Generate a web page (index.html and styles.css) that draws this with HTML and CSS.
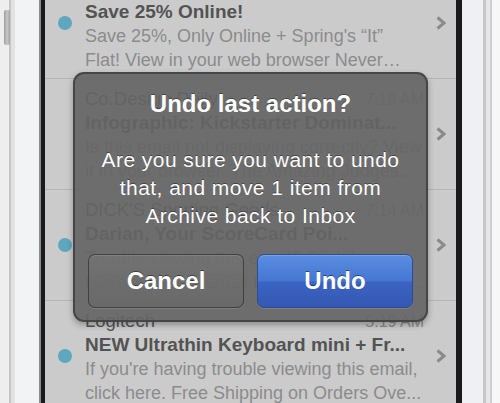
FILE: index.html
```html
<!DOCTYPE html>
<html>
<head>
<meta charset="utf-8">
<link rel="stylesheet" href="styles.css">
</head>
<body>
<div class="phone">
  <div class="frame-left"><div class="side-button"></div></div>
  <div class="screen">
    <div class="list">
      <div class="row">
        <div class="dot-col"><span class="dot"></span></div>
        <div class="content">
          <div class="meta"></div>
          <div class="subject">Save 25% Online!</div>
          <div class="preview">Save 25%, Only Online + Spring's “It”</div>
          <div class="preview">Flat! View in your web browser Never…</div>
        </div>
        <div class="chev-col"><svg class="chev" width="10" height="14" viewBox="0 0 10 14"><polyline points="1.5,1.5 8,7 1.5,12.5" fill="none" stroke="#8a8a8a" stroke-width="3"/></svg></div>
      </div>
      <div class="row">
        <div class="dot-col"></div>
        <div class="content">
          <div class="meta"><span class="sender">Co.Design Daily</span><span class="time">7:16 AM</span></div>
          <div class="subject">Infographic: Kickstarter Dominat...</div>
          <div class="preview">Is this email not displaying correctly? View</div>
          <div class="preview">it in your browser. The Amazing Judges...</div>
        </div>
        <div class="chev-col"><svg class="chev" width="10" height="14" viewBox="0 0 10 14"><polyline points="1.5,1.5 8,7 1.5,12.5" fill="none" stroke="#8a8a8a" stroke-width="3"/></svg></div>
      </div>
      <div class="row">
        <div class="dot-col"><span class="dot"></span></div>
        <div class="content">
          <div class="meta"><span class="sender">DICK'S Sporting Goods</span><span class="time">7:14 AM</span></div>
          <div class="subject">Darian, Your ScoreCard Poi...</div>
          <div class="preview">Trouble viewing this email? Click here.</div>
          <div class="preview">Never miss an email from DICK'S Sports...</div>
        </div>
        <div class="chev-col"><svg class="chev" width="10" height="14" viewBox="0 0 10 14"><polyline points="1.5,1.5 8,7 1.5,12.5" fill="none" stroke="#8a8a8a" stroke-width="3"/></svg></div>
      </div>
      <div class="row">
        <div class="dot-col"><span class="dot"></span></div>
        <div class="content">
          <div class="meta"><span class="sender">Logitech</span><span class="time">5:19 AM</span></div>
          <div class="subject">NEW Ultrathin Keyboard mini + Fr...</div>
          <div class="preview">If you're having trouble viewing this email,</div>
          <div class="preview">click here. Free Shipping on Orders Ove...</div>
        </div>
        <div class="chev-col"><svg class="chev" width="10" height="14" viewBox="0 0 10 14"><polyline points="1.5,1.5 8,7 1.5,12.5" fill="none" stroke="#8a8a8a" stroke-width="3"/></svg></div>
      </div>
    </div>
    <div class="alert">
      <div class="alert-title">Undo last action?</div>
      <div class="alert-message">Are you sure you want to undo<br>that, and move 1 item from<br>Archive back to Inbox</div>
      <div class="alert-buttons">
        <div class="btn btn-cancel">Cancel</div>
        <div class="btn btn-undo">Undo</div>
      </div>
    </div>
  </div>
  <div class="frame-right"></div>
</div>
</body>
</html>
```
FILE: styles.css
```css
html, body {
  margin: 0;
  padding: 0;
}
body {
  width: 500px;
  height: 403px;
  overflow: hidden;
  background: #f2f3f5;
  font-family: "Liberation Sans", Arial, Helvetica, sans-serif;
}
.phone {
  display: flex;
  height: 403px;
}
.frame-left {
  width: 45px;
  flex: none;
  position: relative;
  background: linear-gradient(to right,
    #eeeeee 0, #eeeeee 9px,
    #c4c4c4 9px, #c4c4c4 11px,
    #e2e2e2 11px, #e2e2e2 15px,
    #f2f3f5 15px, #f2f3f5 39px,
    #8c8c8c 39px, #8c8c8c 41px,
    #1b1b1b 41px, #1b1b1b 45px);
}
.side-button {
  position: absolute;
  left: 4px;
  top: 10px;
  width: 6px;
  height: 35px;
  border-radius: 2px;
  background: linear-gradient(to right, #9a9a9a, #c9c9c9 50%, #a5a5a5);
}
.frame-right {
  width: 44px;
  flex: none;
  background: linear-gradient(to right,
    #1b1b1b 0, #1b1b1b 6px,
    #eef0f3 6px, #eef0f3 27px,
    #c6c6c6 27px, #c6c6c6 30px,
    #e6e6e6 30px, #e6e6e6 34px,
    #cfcfcf 34px, #cfcfcf 36px,
    #f7f7f7 36px, #f7f7f7 44px);
}
.screen {
  flex: 1;
  position: relative;
  overflow: hidden;
  background: #cbcbcb;
}
.list {
  margin-top: -32px;
}
.row {
  display: flex;
  align-items: center;
  height: 110px;
  border-bottom: 1px solid #b5b5b5;
}
.dot-col {
  width: 40px;
  flex: none;
  display: flex;
  justify-content: center;
}
.dot {
  display: block;
  width: 14px;
  height: 14px;
  border-radius: 50%;
  background: #5fa6bf;
}
.content {
  flex: 1;
  min-width: 0;
  align-self: stretch;
  padding-top: 8px;
  box-sizing: border-box;
}
.meta {
  display: flex;
  justify-content: space-between;
  align-items: baseline;
  height: 24px;
  line-height: 24px;
}
.sender {
  font-size: 18.5px;
  color: #555555;
}
.time {
  font-size: 16px;
  color: #8a8a8a;
}
.subject {
  font-size: 19px;
  font-weight: bold;
  color: #535353;
  line-height: 24px;
  white-space: nowrap;
}
.preview {
  font-size: 18px;
  color: #8b8b8b;
  line-height: 24px;
  white-space: nowrap;
}
.chev-col {
  width: 32px;
  flex: none;
  display: flex;
  justify-content: flex-start;
  padding-left: 12px;
  box-sizing: border-box;
}
.chev {
  display: block;
}
.alert {
  position: absolute;
  left: 28px;
  top: 72px;
  width: 355px;
  height: 250px;
  box-sizing: border-box;
  padding: 16px 13px 12px;
  border: 2px solid rgba(62, 62, 62, 0.85);
  border-radius: 11px;
  background: rgba(101, 101, 101, 0.92);
  box-shadow: 0 3px 6px rgba(0, 0, 0, 0.3);
  color: #ffffff;
  text-align: center;
  display: flex;
  flex-direction: column;
}
.alert-title {
  font-size: 24px;
  font-weight: bold;
  line-height: 28px;
  text-shadow: 0 -1px 0 rgba(0, 0, 0, 0.4);
}
.alert-message {
  margin-top: 28px;
  font-size: 21px;
  letter-spacing: 0.45px;
  line-height: 28px;
  text-shadow: 0 -1px 0 rgba(0, 0, 0, 0.4);
}
.alert-buttons {
  margin-top: 24px;
  display: flex;
  gap: 13px;
}
.btn {
  flex: 1;
  height: 54px;
  box-sizing: border-box;
  border-radius: 7px;
  font-size: 24px;
  font-weight: bold;
  line-height: 52px;
  text-shadow: 0 -1px 0 rgba(0, 0, 0, 0.45);
}
.btn-cancel {
  border: 1px solid rgba(50, 50, 50, 0.75);
  background: linear-gradient(rgba(118, 118, 118, 0.6), rgba(102, 102, 102, 0.55));
  box-shadow: inset 0 1px 0 rgba(255, 255, 255, 0.12), 0 1px 0 rgba(255, 255, 255, 0.12);
}
.btn-undo {
  border: 1px solid #2d4c93;
  background: linear-gradient(#5a8ee0 0%, #4576d2 50%, #3a64c2 52%, #3558b3 100%);
  box-shadow: inset 0 1px 0 rgba(255, 255, 255, 0.2), 0 1px 0 rgba(255, 255, 255, 0.12);
}
```
